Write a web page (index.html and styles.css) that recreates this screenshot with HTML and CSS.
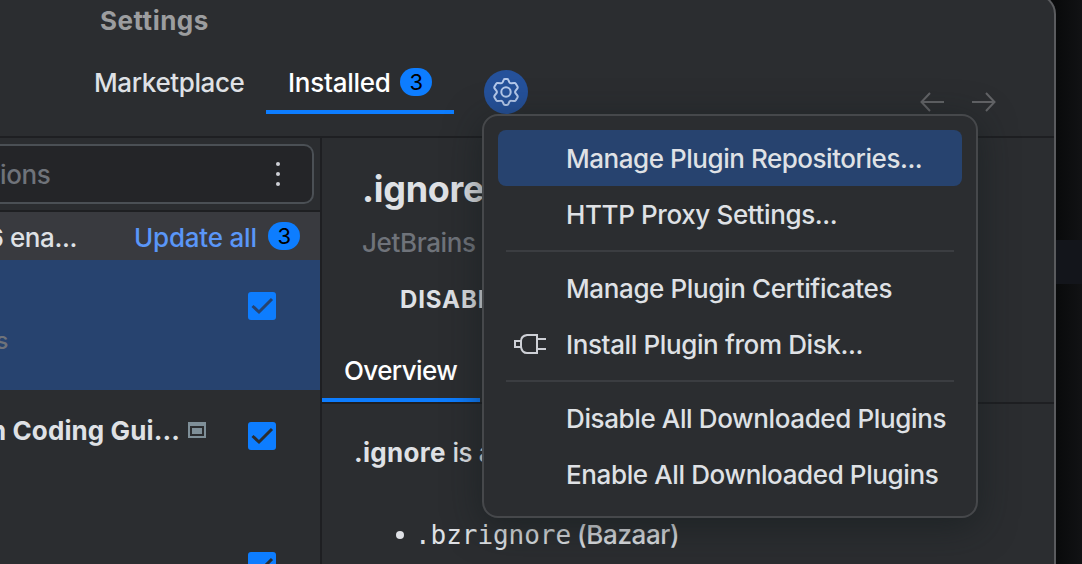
FILE: index.html
```html
<!DOCTYPE html>
<html lang="en">
<head>
<meta charset="utf-8">
<title>Settings</title>
<link rel="stylesheet" href="styles.css">
</head>
<body>
<div class="desktop-band"></div>
<div class="window">
  <header class="title"><span class="title-text">Settings</span></header>
  <nav class="toolbar">
    <div class="tab tab-market"><span>Marketplace</span></div>
    <div class="tab tab-active"><span class="t-installed">Installed</span><span class="badge">3</span></div>
    <button class="gear" aria-label="Plugin options">
      <svg width="30" height="30" viewBox="0 0 30 30" fill="none" stroke="#b4c8ea" stroke-width="2" stroke-linejoin="round"><path d="M12.700 2.800Q13 2 14 2H16Q17 2 17.300 2.800L18.300 5.200Q18.900 6.500 20.300 6.300L23.300 6Q24.300 5.900 24.800 6.700L26.500 9.600Q27 10.500 26.400 11.300L24.500 13.800Q23.700 15 24.500 16.200L26.400 18.700Q27 19.500 26.500 20.400L24.800 23.300Q24.300 24.100 23.300 24L20.300 23.700Q18.900 23.500 18.300 24.800L17.300 27.200Q17 28 16 28H14Q13 28 12.700 27.200L11.700 24.800Q11.100 23.500 9.700 23.700L6.700 24Q5.700 24.100 5.200 23.300L3.500 20.400Q3 19.500 3.600 18.700L5.500 16.200Q6.300 15 5.500 13.800L3.600 11.300Q3 10.500 3.500 9.600L5.200 6.700Q5.700 5.900 6.700 6L9.700 6.300Q11.100 6.500 11.700 5.200Z"/><circle cx="15" cy="15" r="4.700"/></svg>
    </button>
    <div class="history">
      <svg width="24" height="20" viewBox="0 0 24 20" fill="none" stroke="#626366" stroke-width="2"><path d="M24 10H1.500M10 1L1.500 10L10 19"/></svg>
      <svg width="24" height="20" viewBox="0 0 24 20" fill="none" stroke="#626366" stroke-width="2"><path d="M0 10H22.500M14 1L22.500 10L14 19"/></svg>
    </div>
  </nav>
  <main class="main">
    <section class="list">
      <div class="search"><span class="search-text">ions</span><span class="dots"><i></i><i></i><i></i></span></div>
      <div class="group"><span class="count">6 ena...</span><span class="update">Update all</span><span class="badge">3</span></div>
      <div class="plugin selected">
        <span class="vendor">s</span>
        <svg class="check" width="28" height="28" viewBox="0 0 28 28"><rect width="28" height="28" rx="3" fill="#0d7dff"/><path d="M4.500 14L11 20L24 7" fill="none" stroke="#27436f" stroke-width="3"/></svg>
      </div>
      <div class="plugin">
        <span class="name">n Coding Gui...</span>
        <svg class="mark" width="18" height="16" viewBox="0 0 18 16"><path d="M1 1H17V15H1Z" fill="none" stroke="#7f8f98" stroke-width="2"/><path d="M0 0H18V4H0Z M4 6H14V12H4Z" fill="#7f8f98"/></svg>
        <svg class="check" width="28" height="28" viewBox="0 0 28 28"><rect width="28" height="28" rx="3" fill="#0d7dff"/><path d="M4.500 14L11 20L24 7" fill="none" stroke="#2b2d30" stroke-width="3"/></svg>
      </div>
      <div class="plugin plugin-last">
        <svg class="check" width="28" height="28" viewBox="0 0 28 28"><rect width="28" height="28" rx="3" fill="#0d7dff"/><path d="M4.500 14L11 20L24 7" fill="none" stroke="#2b2d30" stroke-width="3"/></svg>
      </div>
    </section>
    <section class="details">
      <h1 class="heading"><span>.ignore</span></h1>
      <div class="author"><span>JetBrains</span></div>
      <div class="action"><span>DISABLE</span></div>
      <div class="subtabs"><div class="subtab"><span>Overview</span></div></div>
      <p class="about"><b>.ignore</b> <span>is a</span></p>
      <ul class="files"><li><code>.bzrignore</code><span>(Bazaar)</span></li></ul>
    </section>
  </main>
</div>
<div class="menu">
  <div class="item highlighted"><span class="m1">Manage Plugin Repositories...</span></div>
  <div class="item"><span>HTTP Proxy Settings...</span></div>
  <hr>
  <div class="item"><span>Manage Plugin Certificates</span></div>
  <div class="item">
    <svg class="plug" width="34" height="24" viewBox="0 0 34 24" fill="none" stroke="#ced0d6" stroke-width="2"><path d="M2 9H8V15H2Z M24 3H14Q8 4 8 9V15Q9 21 14 21H24Z M24 7H33M24 17H33"/></svg>
    <span>Install Plugin from Disk...</span>
  </div>
  <hr>
  <div class="item"><span>Disable All Downloaded Plugins</span></div>
  <div class="item"><span>Enable All Downloaded Plugins</span></div>
</div>
</body>
</html>
```

FILE: styles.css
```css
* { box-sizing: border-box; }
html, body { margin: 0; height: 564px; overflow: hidden; }
body {
  position: relative;
  background: linear-gradient(90deg, #090a0b 1056px, #111214 1082px);
  color: #dfe1e5;
  font: 450 26px/30px Inter, "Liberation Sans", sans-serif;
  letter-spacing: -.38px;
  white-space: nowrap;
}
.desktop-band { position: absolute; right: 0; top: 240px; width: 26px; height: 44px; background: #13151b; }
.window {
  position: absolute;
  left: -30px; top: -6px;
  width: 1086px; height: 600px;
  padding: 4px 0 0 30px;
  overflow: hidden;
  display: flex; flex-direction: column;
  background: #2b2d30;
  border: 2px solid #5a5b5e;
  border-left: 0;
  border-radius: 20px;
}
.title { flex: none; height: 44px; padding-left: 100px; color: #9c9d9f; font-weight: 700; line-height: 42px; letter-spacing: .5px; }
.toolbar { flex: none; display: flex; height: 94px; border-bottom: 2px solid #1e1f22; }
.tab { height: 70px; line-height: 78px; }
.tab-market { width: 266px; padding-left: 94px; }
.tab-active {
  display: flex; width: 188px; padding-left: 22px;
  border-bottom: 4px solid #0d7dff; color: #fff;
}
.t-installed { width: 102px; letter-spacing: -.25px; }
.badge {
  width: 32px; height: 28px; margin: 24px 0 0 10px;
  border-radius: 14px; background: #0d7dff; color: #000;
  font-size: 22px; font-weight: 400; line-height: 28px; text-align: center;
}
.gear {
  display: grid; place-items: center;
  width: 44px; height: 44px; margin: 26px 0 0 30px; padding: 0;
  border: 0; border-radius: 50%; background: #25519a;
}
.history { display: flex; gap: 28px; margin: 48px 58px 0 auto; }
.main { display: flex; flex: 1; }
.list { width: 322px; border-right: 2px solid #1e1f22; }
.search {
  display: flex; justify-content: space-between;
  height: 60px; width: 334px; margin: 6px 0 6px -20px; padding: 0 32px 0 20px;
  border: 2px solid #4b5055; border-left: 0; border-radius: 10px;
  background: #242528; color: #6f737a; line-height: 58px;
}
.dots { display: flex; flex-direction: column; gap: 6px; padding-top: 16px; }
.dots i { width: 4px; height: 4px; border-radius: 50%; background: #ced0d6; }
.group { display: flex; height: 50px; border-top: 2px solid #1e1f22; background: #393a3f; line-height: 51px; }
.group .badge { margin: 10px 0 0 11px; }
.count { display: flex; justify-content: flex-end; width: 77px; }
.update { width: 123px; margin-left: 57px; color: #5a96f8; letter-spacing: -.2px; }
.plugin { display: flex; height: 130px; padding: 32px 44px 0 0; }
.plugin-last { height: 44px; overflow: hidden; }
.selected { background: #27436f; }
.check { margin-left: auto; }
.vendor { display: flex; justify-content: flex-end; width: 8px; padding-top: 34px; color: #6f737a; font-size: 24px; }
.name { display: flex; justify-content: flex-end; width: 180px; margin-top: -6px; font-weight: 700; letter-spacing: .1px; }
.mark { margin-left: 8px; }
.details { width: 732px; }
.heading { margin: 0; padding: 30px 0 0 40px; font-size: 36px; line-height: 42px; letter-spacing: -.3px; }
.author { padding: 18px 0 0 40px; color: #6f737a; }
.action { padding: 27px 0 0 78px; font-size: 24px; font-weight: 700; letter-spacing: .9px; }
.subtabs { height: 89px; border-bottom: 2px solid #1e1f22; }
.subtab { width: 158px; height: 87px; padding: 41px 0 0 22px; border-bottom: 4px solid #0d7dff; color: #fff; letter-spacing: -.6px; }
.about { margin: 0; padding: 34px 0 0 32px; }
.about b { letter-spacing: .3px; }
.files { margin: 0; padding: 52px 0 0 74px; list-style: none; }
.files li { display: flex; align-items: baseline; }
.files li::before { content: ""; width: 8px; height: 8px; margin-right: 11px; border-radius: 50%; background: #dfe1e5; align-self: center; }
.files code { width: 162px; font: 26px/30px "DejaVu Sans Mono", monospace; letter-spacing: -.05px; }
.menu {
  position: absolute; left: 482px; top: 114px;
  width: 496px; height: 404px; padding: 14px;
  border: 2px solid #46484b; border-radius: 16px;
  background: #2b2d30;
  box-shadow: 0 8px 36px rgba(20, 28, 30, .6);
}
.item { display: flex; height: 56px; padding-left: 68px; border-radius: 8px; line-height: 57px; }
.highlighted { background: #27436f; }
.m1 { letter-spacing: -.46px; }
.menu hr { height: 2px; margin: 8px; border: 0; background: #3b3d41; }
.plug { margin: 16px 19px 0 -53px; width: 34px; flex: none; }
```
